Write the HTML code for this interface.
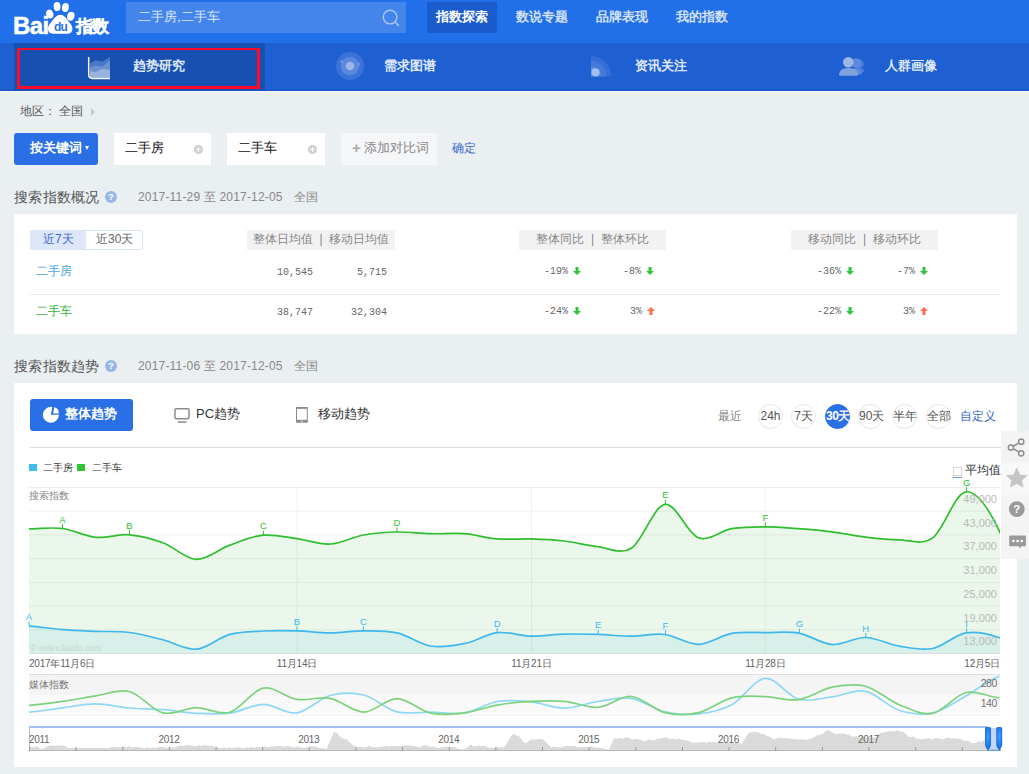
<!DOCTYPE html>
<html><head><meta charset="utf-8">
<style>
*{box-sizing:border-box;margin:0;padding:0}
html,body{width:1029px;height:774px;overflow:hidden}
body{background:#eaeff2;font-family:"Liberation Sans",sans-serif;position:relative;color:#333}
.a{position:absolute;white-space:nowrap}
#top{left:0;top:0;width:1029px;height:43px;background:#2270e9}
#sub{left:0;top:43px;width:1029px;height:48px;background:#1e5fd2}
.navbtn{top:2px;height:31px;width:70px;font-size:13px;font-weight:bold;color:#d3e0f8;text-align:center;line-height:29px}
.tabt{top:57px;font-size:13px;font-weight:bold;color:#dfe8fb;line-height:18px}
.panel{background:#fff}
.h2{font-size:14px;color:#555;line-height:16px;letter-spacing:0.3px}
.date{font-size:12px;color:#888;line-height:14px;letter-spacing:0.18px}
.qm{width:12px;height:12px;border-radius:6px;background:#96b6e8;color:#fff;font-size:9.5px;font-weight:bold;text-align:center;line-height:12px}
.inp{top:133px;height:32px;background:#fff;font-size:13px;color:#111;line-height:30px;padding-left:11px}
.plus{width:9px;height:9px;border-radius:5px;background:#cfcfcf}
.plus:before{content:"";position:absolute;left:2px;top:4px;width:5px;height:1px;background:#fff}
.plus:after{content:"";position:absolute;left:4px;top:2px;width:1px;height:5px;background:#fff}
.th{top:230px;height:20px;background:#f2f2f2;font-size:12px;color:#888;line-height:19px}
.num{font-family:"Liberation Mono",monospace;font-size:10px;color:#666;line-height:12px;text-align:right}
.arr{width:8px;height:8px}
.circ{top:404px;width:25px;height:25px;border-radius:13px;border:1px solid #e6e6e6;font-size:12px;color:#555;text-align:center;line-height:23px;background:#fff}
.side{left:1001px;width:28px;height:32px;background:#f2f2f2}
</style></head><body>
<div class="a" id="top"></div>
<div class="a" id="sub"></div>
<!-- logo -->
<svg class="a" style="left:10px;top:0" width="100" height="40" viewBox="0 0 100 40">
  <text x="3" y="33.5" font-family="Liberation Sans" font-weight="bold" font-size="24" fill="#fff" stroke="#fff" stroke-width="0.5" letter-spacing="-0.6">Bai</text>
  <ellipse cx="39.8" cy="14" rx="3.6" ry="4.6" fill="#fff" transform="rotate(-20 39.8 14)"/>
  <ellipse cx="47.1" cy="6.6" rx="3.4" ry="4.5" fill="#fff" transform="rotate(-5 47.1 6.6)"/>
  <ellipse cx="55.4" cy="7.5" rx="3.4" ry="4.5" fill="#fff" transform="rotate(8 55.4 7.5)"/>
  <ellipse cx="60.8" cy="16.2" rx="3.6" ry="4.5" fill="#fff" transform="rotate(20 60.8 16.2)"/>
  <path d="M50.3,14.8 C46,14.8 43.5,19.5 41,22.5 C38,26 37.5,28.5 38.5,31 C39.5,33.5 42,33.7 44,33.7 L56.5,33.7 C58.5,33.7 61,33.5 62,31 C63,28.5 62.5,26 59.5,22.5 C57,19.5 54.5,14.8 50.3,14.8 Z" fill="#fff"/>
  <text x="50.5" y="31.2" font-family="Liberation Sans" font-weight="bold" font-size="12" fill="#2671e6" text-anchor="middle" letter-spacing="-0.8">du</text>
  <text x="66" y="32" font-weight="bold" font-size="16.5" fill="#fff" stroke="#fff" stroke-width="0.4" letter-spacing="-1">指数</text>
</svg>
<!-- search -->
<div class="a" style="left:126px;top:2px;width:280px;height:31px;background:#4485ec"></div>
<div class="a" style="left:138px;top:9px;font-size:13px;color:#dbe6f8;line-height:16px">二手房,二手车</div>
<svg class="a" style="left:381px;top:8px" width="20" height="20" viewBox="0 0 20 20"><circle cx="9.1" cy="9.1" r="6.8" fill="none" stroke="#a9c6f4" stroke-width="1.4"/><line x1="13.9" y1="14" x2="17.4" y2="17.4" stroke="#a9c6f4" stroke-width="1.6" stroke-linecap="round"/></svg>
<div class="a navbtn" style="left:427px;background:#1b5ccc;border-radius:2px;color:#fff">指数探索</div>
<div class="a navbtn" style="left:507px">数说专题</div>
<div class="a navbtn" style="left:587px">品牌表现</div>
<div class="a navbtn" style="left:667px">我的指数</div>
<!-- sub nav -->
<div class="a" style="left:14px;top:43px;width:251px;height:48px;background:#1850b1"></div>
<div class="a" style="left:0;top:90px;width:1029px;height:1px;background:#1452c4"></div>
<div class="a" style="left:17px;top:48px;width:243px;height:41px;border:solid #ff0a2a;border-width:2px 3px 3px 3px"></div>
<svg class="a" style="left:80px;top:50px" width="40" height="35" viewBox="0 0 40 35">
  <path d="M10,13.6 L15.4,10.2 L22.6,11.8 L30,6.8 V27.8 H12.5 Q10,27.8 10,25.3 Z" fill="#4a78c8"/>
  <path d="M10,18 L15.4,15.6 L22.6,16.7 L30,10.6 V27.8 H12.5 Q10,27.8 10,25.3 Z" fill="#6d92d2"/>
  <path d="M10,21.3 L15.4,22.2 L22.6,19 L30,19.9 V27.8 H12.5 Q10,27.8 10,25.3 Z" fill="#9ab3de"/>
  <path d="M8.7,7 V24.5 Q8.7,28.4 12.6,28.4 H30" fill="none" stroke="#f4f7fc" stroke-width="1.5"/>
</svg>
<div class="a tabt" style="left:133px">趋势研究</div>
<svg class="a" style="left:336px;top:52px" width="28" height="28" viewBox="0 0 28 28">
  <circle cx="14" cy="14" r="14" fill="#3a72d8"/>
  <circle cx="14" cy="14" r="9.2" fill="#5a88dd"/>
  <circle cx="14" cy="14" r="4.3" fill="#9db8e8"/>
  <circle cx="6" cy="9.7" r="1.6" fill="#6d96e0"/><circle cx="22.5" cy="12" r="1.6" fill="#6d96e0"/>
</svg>
<div class="a tabt" style="left:384px">需求图谱</div>
<svg class="a" style="left:590px;top:55px" width="24" height="24" viewBox="0 0 24 24">
  <path d="M1,1 A20.5,20.5 0 0 1 21.5,21.5 H1 Z" fill="#366dd4"/>
  <path d="M1,6 A15.5,15.5 0 0 1 16.5,21.5 H1 Z" fill="#457ad9"/>
  <path d="M1,11 A10.5,10.5 0 0 1 11.5,21.5 H1 Z" fill="#5686dd"/>
  <circle cx="5.5" cy="17.3" r="4.1" fill="#a6c0ee"/>
</svg>
<div class="a tabt" style="left:635px">资讯关注</div>
<svg class="a" style="left:832px;top:50px" width="38" height="35" viewBox="0 0 38 35">
  <circle cx="27.6" cy="14" r="4.3" fill="#4a7dd8"/><path d="M18,22.3 Q20,17.8 26,17.8 Q31.5,17.8 32.3,21 Q32.3,22.3 30.8,22.3 Z" fill="#4a7dd8"/>
  <circle cx="24.4" cy="13.1" r="4.9" fill="#5d8ade"/><path d="M14,24.5 Q16,18.6 22.5,18.6 Q29,18.6 30,23 Q30,24.5 28.5,24.5 Z" fill="#5d8ade"/>
  <circle cx="16.3" cy="12.2" r="5.3" fill="#9cb6e6"/><path d="M7,24.3 Q7.5,18.1 16.5,18.1 Q25.5,18.1 26.2,24.3 Q26.2,25.8 24.7,25.8 H8.5 Q7,25.8 7,24.3 Z" fill="#7fa1de"/>
</svg>
<div class="a tabt" style="left:885px">人群画像</div>
<div class="a" style="left:0;top:91px;width:1029px;height:1px;background:#f7f8f5"></div>

<!-- region -->
<div class="a" style="left:20px;top:104px;font-size:12px;color:#555;line-height:14px">地区：</div>
<div class="a" style="left:59px;top:104px;font-size:12px;color:#555;line-height:14px">全国</div>
<div class="a" style="left:91px;top:108px;width:0;height:0;border-left:4px solid #c8c8c8;border-top:4px solid transparent;border-bottom:4px solid transparent"></div>
<!-- keyword row -->
<div class="a" style="left:14px;top:133px;width:84px;height:32px;background:#2a6fe6;border-radius:3px"></div>
<div class="a" style="left:30px;top:140px;font-size:13px;font-weight:bold;color:#fff;line-height:16px">按关键词</div>
<div class="a" style="left:85px;top:146px;width:0;height:0;border-top:4px solid #fff;border-left:2.5px solid transparent;border-right:2.5px solid transparent"></div>
<div class="a inp" style="left:114px;width:97px">二手房</div>
<div class="a plus" style="left:194px;top:145px"></div>
<div class="a inp" style="left:227px;width:98px">二手车</div>
<div class="a plus" style="left:308px;top:145px"></div>
<div class="a" style="left:341px;top:133px;width:96px;height:32px;background:#f5f6f8"></div>
<div class="a" style="left:352px;top:139px;font-size:15px;font-weight:bold;color:#aaa;line-height:18px">+</div>
<div class="a" style="left:364px;top:140px;font-size:13px;color:#888;line-height:16px">添加对比词</div>
<div class="a" style="left:452px;top:141px;font-size:12px;color:#3a67c8;line-height:14px">确定</div>

<!-- section 1 -->
<div class="a h2" style="left:14px;top:189px">搜索指数概况</div>
<div class="a qm" style="left:105px;top:191px">?</div>
<div class="a date" style="left:138px;top:190px">2017-11-29 至 2017-12-05</div>
<div class="a date" style="left:294px;top:190px">全国</div>
<div class="a panel" style="left:14px;top:214px;width:1003px;height:120px"></div>
<div class="a" style="left:30px;top:230px;width:113px;height:20px;border:1px solid #d6e2f5;border-radius:2px;background:#fff"></div>
<div class="a" style="left:30px;top:230px;width:56px;height:20px;background:#dde7f8;border-radius:2px 0 0 2px"></div>
<div class="a" style="left:43px;top:232px;font-size:12px;color:#3c66d0;line-height:15px">近7天</div>
<div class="a" style="left:96px;top:232px;font-size:12px;color:#666;line-height:15px">近30天</div>
<div class="a th" style="left:247px;width:148px;text-align:center">整体日均值 &nbsp;|&nbsp; 移动日均值</div>
<div class="a th" style="left:519px;width:147px;text-align:center">整体同比 &nbsp;|&nbsp; 整体环比</div>
<div class="a th" style="left:791px;width:147px;text-align:center">移动同比 &nbsp;|&nbsp; 移动环比</div>
<div class="a" style="left:36px;top:264px;font-size:12px;color:#48a6e6;line-height:14px">二手房</div>
<div class="a" style="left:36px;top:304px;font-size:12px;color:#3ab23a;line-height:14px">二手车</div>
<div class="a" style="left:30px;top:294px;width:970px;height:1px;background:#eeeeee"></div>
<div class="a num" style="left:262px;top:267px;width:51px">10,545</div>
<div class="a num" style="left:336px;top:267px;width:51px">5,715</div>
<div class="a num" style="left:262px;top:307px;width:51px">38,747</div>
<div class="a num" style="left:336px;top:307px;width:51px">32,304</div>
<div class="a num" style="left:528px;top:266px;width:40px">-19%</div>
<svg class="a" style="left:573px;top:267px" width="8" height="8" viewBox="0 0 8 8"><path d="M2.5,0 L5.5,0 L5.5,4 L8,4 L4,8 L0,4 L2.5,4 Z" fill="#2ec53a"/></svg>
<div class="a num" style="left:601px;top:266px;width:40px">-8%</div>
<svg class="a" style="left:646px;top:267px" width="8" height="8" viewBox="0 0 8 8"><path d="M2.5,0 L5.5,0 L5.5,4 L8,4 L4,8 L0,4 L2.5,4 Z" fill="#2ec53a"/></svg>
<div class="a num" style="left:801px;top:266px;width:40px">-36%</div>
<svg class="a" style="left:846px;top:267px" width="8" height="8" viewBox="0 0 8 8"><path d="M2.5,0 L5.5,0 L5.5,4 L8,4 L4,8 L0,4 L2.5,4 Z" fill="#2ec53a"/></svg>
<div class="a num" style="left:875px;top:266px;width:40px">-7%</div>
<svg class="a" style="left:920px;top:267px" width="8" height="8" viewBox="0 0 8 8"><path d="M2.5,0 L5.5,0 L5.5,4 L8,4 L4,8 L0,4 L2.5,4 Z" fill="#2ec53a"/></svg>
<div class="a num" style="left:528px;top:306px;width:40px">-24%</div>
<svg class="a" style="left:573px;top:307px" width="8" height="8" viewBox="0 0 8 8"><path d="M2.5,0 L5.5,0 L5.5,4 L8,4 L4,8 L0,4 L2.5,4 Z" fill="#2ec53a"/></svg>
<div class="a num" style="left:602px;top:306px;width:40px">3%</div>
<svg class="a" style="left:647px;top:307px" width="8" height="8" viewBox="0 0 8 8"><path d="M4,0 L8,4 L5.5,4 L5.5,8 L2.5,8 L2.5,4 L0,4 Z" fill="#ff6e4f"/></svg>
<div class="a num" style="left:801px;top:306px;width:40px">-22%</div>
<svg class="a" style="left:846px;top:307px" width="8" height="8" viewBox="0 0 8 8"><path d="M2.5,0 L5.5,0 L5.5,4 L8,4 L4,8 L0,4 L2.5,4 Z" fill="#2ec53a"/></svg>
<div class="a num" style="left:875px;top:306px;width:40px">3%</div>
<svg class="a" style="left:920px;top:307px" width="8" height="8" viewBox="0 0 8 8"><path d="M4,0 L8,4 L5.5,4 L5.5,8 L2.5,8 L2.5,4 L0,4 Z" fill="#ff6e4f"/></svg>

<!-- section 2 -->
<div class="a h2" style="left:14px;top:358px">搜索指数趋势</div>
<div class="a qm" style="left:105px;top:360px">?</div>
<div class="a date" style="left:138px;top:359px">2017-11-06 至 2017-12-05</div>
<div class="a date" style="left:294px;top:359px">全国</div>
<div class="a panel" style="left:14px;top:383px;width:1003px;height:384px"></div>
<div class="a" style="left:30px;top:399px;width:103px;height:32px;background:#2a6fe6;border-radius:3px"></div>
<svg class="a" style="left:42px;top:406px" width="18" height="18" viewBox="0 0 18 18">
  <path d="M8.9,8.8 L10.29,0.92 A8,8 0 1 0 16.9,8.8 Z" fill="#fff"/>
  <path d="M11.1,7.4 L12.3,1.3 A6.2,6.2 0 0 1 16.9,7.4 Z" fill="#fff"/>
</svg>
<div class="a" style="left:65px;top:406px;font-size:13px;font-weight:bold;color:#fff;line-height:16px">整体趋势</div>
<svg class="a" style="left:168px;top:402px" width="28" height="26" viewBox="0 0 28 26">
  <rect x="6.95" y="6.75" width="14.1" height="10.1" rx="1.5" fill="none" stroke="#8a8a8a" stroke-width="1.5"/>
  <rect x="9.7" y="19.3" width="8.8" height="1.5" fill="#8a8a8a"/>
</svg>
<div class="a" style="left:196px;top:406px;font-size:13px;color:#333;line-height:16px">PC趋势</div>
<svg class="a" style="left:290px;top:402px" width="24" height="26" viewBox="0 0 24 26">
  <rect x="6" y="5" width="11.8" height="15.7" fill="#8a8a8a"/>
  <rect x="7" y="6.85" width="9.8" height="10.95" fill="#fff"/>
  <circle cx="11.9" cy="19.2" r="0.8" fill="#fff"/>
</svg>
<div class="a" style="left:318px;top:406px;font-size:13px;color:#333;line-height:16px">移动趋势</div>
<div class="a" style="left:718px;top:409px;font-size:12px;color:#888;line-height:15px">最近</div>
<div class="a circ" style="left:758px">24h</div>
<div class="a circ" style="left:791px">7天</div>
<div class="a circ" style="left:825px;background:#2a6fe6;border-color:#2a6fe6;color:#fff;font-weight:bold;letter-spacing:-0.5px">30天</div>
<div class="a circ" style="left:858px">90天</div>
<div class="a circ" style="left:892px">半年</div>
<div class="a circ" style="left:926px">全部</div>
<div class="a" style="left:960px;top:409px;font-size:12px;color:#3a67c8;line-height:15px">自定义</div>
<div class="a" style="left:30px;top:447px;width:987px;height:1px;background:#dddddd"></div>
<div class="a" style="left:29px;top:464px;width:8px;height:7px;background:#3cbcf0"></div>
<div class="a" style="left:43px;top:462px;font-size:10px;color:#333;line-height:12px">二手房</div>
<div class="a" style="left:77px;top:464px;width:8px;height:7px;background:#2ec42e"></div>
<div class="a" style="left:92px;top:462px;font-size:10px;color:#333;line-height:12px">二手车</div>
<div class="a" style="left:29px;top:490px;font-size:10px;color:#888;line-height:12px">搜索指数</div>
<div class="a" style="left:953px;top:467px;width:9px;height:9px;border:1px solid #d6d6d6;background:#fff"></div>
<div class="a" style="left:953px;top:477px;width:9px;height:1px;background:#6a9ae6"></div>
<div class="a" style="left:965px;top:463px;font-size:12px;color:#333;line-height:15px">平均值</div>
<svg width="1029" height="774" style="position:absolute;left:0;top:0">
<line x1="29" x2="1000" y1="487.5" y2="487.5" stroke="#eeeeee" stroke-width="1"/>
<line x1="29" x2="1000" y1="511.2" y2="511.2" stroke="#f1f1f1" stroke-width="1"/>
<line x1="29" x2="1000" y1="534.9" y2="534.9" stroke="#f1f1f1" stroke-width="1"/>
<line x1="29" x2="1000" y1="558.6" y2="558.6" stroke="#f1f1f1" stroke-width="1"/>
<line x1="29" x2="1000" y1="582.4" y2="582.4" stroke="#f1f1f1" stroke-width="1"/>
<line x1="29" x2="1000" y1="606.1" y2="606.1" stroke="#f1f1f1" stroke-width="1"/>
<line x1="29" x2="1000" y1="629.8" y2="629.8" stroke="#f1f1f1" stroke-width="1"/>
<line x1="29" x2="1000" y1="653.5" y2="653.5" stroke="#eeeeee" stroke-width="1"/>
<line x1="297.0" x2="297.0" y1="487" y2="653" stroke="#eef0ee" stroke-width="1"/>
<line x1="531.5" x2="531.5" y1="487" y2="653" stroke="#eef0ee" stroke-width="1"/>
<line x1="765.3" x2="765.3" y1="487" y2="653" stroke="#eef0ee" stroke-width="1"/>
<defs><clipPath id="cc"><rect x="29" y="470" width="971" height="184"/></clipPath></defs><g clip-path="url(#cc)">
<path d="M29.00,528.80 C40.16,528.75 51.31,527.08 62.47,528.50 C73.62,529.92 84.78,536.25 95.93,537.30 C107.09,538.35 118.24,533.90 129.40,534.80 C140.55,535.70 151.71,538.62 162.86,542.70 C174.02,546.78 185.17,558.90 196.33,559.30 C207.48,559.70 218.64,549.12 229.79,545.10 C240.95,541.08 252.10,536.28 263.26,535.20 C274.41,534.12 285.57,537.13 296.72,538.60 C307.88,540.07 319.03,544.60 330.19,544.00 C341.34,543.40 352.50,537.00 363.66,535.00 C374.81,533.00 385.97,532.22 397.12,532.00 C408.28,531.78 419.43,533.42 430.59,533.70 C441.74,533.98 452.90,532.83 464.05,533.70 C475.21,534.57 486.36,538.03 497.52,538.90 C508.67,539.77 519.83,538.55 530.98,538.90 C542.14,539.25 553.29,539.70 564.45,541.00 C575.60,542.30 586.76,545.50 597.91,546.70 C609.07,547.90 620.22,555.25 631.38,548.20 C642.53,541.15 653.69,506.15 664.84,504.40 C676.00,502.65 687.15,533.65 698.31,537.70 C709.47,541.75 720.62,530.52 731.78,528.70 C742.93,526.88 754.09,526.80 765.24,526.80 C776.40,526.80 787.55,527.85 798.71,528.70 C809.86,529.55 821.02,530.50 832.17,531.90 C843.33,533.30 854.48,535.78 865.64,537.10 C876.79,538.42 887.95,539.67 899.10,539.80 C910.26,539.93 921.41,545.90 932.57,537.90 C943.72,529.90 954.88,492.90 966.03,491.80 C977.19,490.70 988.34,507.73 999.50,531.30 C1010.65,554.87 1021.81,616.22 1032.96,633.20 L1040,653 L29,653 Z" fill="#2db52d" fill-opacity="0.10"/>
<path d="M29.00,626.20 C40.16,626.77 51.31,628.75 62.47,629.60 C73.62,630.45 84.78,630.82 95.93,631.30 C107.09,631.78 118.24,631.08 129.40,632.50 C140.55,633.92 151.71,637.02 162.86,639.80 C174.02,642.58 185.17,650.10 196.33,649.20 C207.48,648.30 218.64,637.43 229.79,634.40 C240.95,631.37 252.10,631.58 263.26,631.00 C274.41,630.42 285.57,630.60 296.72,630.90 C307.88,631.20 319.03,632.82 330.19,632.80 C341.34,632.78 352.50,630.78 363.66,630.80 C374.81,630.82 385.97,630.37 397.12,632.90 C408.28,635.43 419.43,644.20 430.59,646.00 C441.74,647.80 452.90,645.92 464.05,643.70 C475.21,641.48 486.36,633.97 497.52,632.70 C508.67,631.43 519.83,635.87 530.98,636.10 C542.14,636.33 553.29,634.38 564.45,634.10 C575.60,633.82 586.76,634.05 597.91,634.40 C609.07,634.75 620.22,636.18 631.38,636.20 C642.53,636.22 653.69,633.15 664.84,634.50 C676.00,635.85 687.15,644.48 698.31,644.30 C709.47,644.12 720.62,635.35 731.78,633.40 C742.93,631.45 754.09,632.65 765.24,632.60 C776.40,632.55 787.55,631.12 798.71,633.10 C809.86,635.08 821.02,643.77 832.17,644.50 C843.33,645.23 854.48,637.23 865.64,637.50 C876.79,637.77 887.95,644.27 899.10,646.10 C910.26,647.93 921.41,650.72 932.57,648.50 C943.72,646.28 954.88,634.60 966.03,632.80 C977.19,631.00 988.34,633.72 999.50,637.70 C1010.65,641.68 1021.81,653.53 1032.96,656.70 L1040,653 L29,653 Z" fill="#3ab6ea" fill-opacity="0.10"/>
<path d="M29.00,528.80 C40.16,528.75 51.31,527.08 62.47,528.50 C73.62,529.92 84.78,536.25 95.93,537.30 C107.09,538.35 118.24,533.90 129.40,534.80 C140.55,535.70 151.71,538.62 162.86,542.70 C174.02,546.78 185.17,558.90 196.33,559.30 C207.48,559.70 218.64,549.12 229.79,545.10 C240.95,541.08 252.10,536.28 263.26,535.20 C274.41,534.12 285.57,537.13 296.72,538.60 C307.88,540.07 319.03,544.60 330.19,544.00 C341.34,543.40 352.50,537.00 363.66,535.00 C374.81,533.00 385.97,532.22 397.12,532.00 C408.28,531.78 419.43,533.42 430.59,533.70 C441.74,533.98 452.90,532.83 464.05,533.70 C475.21,534.57 486.36,538.03 497.52,538.90 C508.67,539.77 519.83,538.55 530.98,538.90 C542.14,539.25 553.29,539.70 564.45,541.00 C575.60,542.30 586.76,545.50 597.91,546.70 C609.07,547.90 620.22,555.25 631.38,548.20 C642.53,541.15 653.69,506.15 664.84,504.40 C676.00,502.65 687.15,533.65 698.31,537.70 C709.47,541.75 720.62,530.52 731.78,528.70 C742.93,526.88 754.09,526.80 765.24,526.80 C776.40,526.80 787.55,527.85 798.71,528.70 C809.86,529.55 821.02,530.50 832.17,531.90 C843.33,533.30 854.48,535.78 865.64,537.10 C876.79,538.42 887.95,539.67 899.10,539.80 C910.26,539.93 921.41,545.90 932.57,537.90 C943.72,529.90 954.88,492.90 966.03,491.80 C977.19,490.70 988.34,507.73 999.50,531.30 C1010.65,554.87 1021.81,616.22 1032.96,633.20" fill="none" stroke="#2fbe2f" stroke-width="1.7"/>
<path d="M29.00,626.20 C40.16,626.77 51.31,628.75 62.47,629.60 C73.62,630.45 84.78,630.82 95.93,631.30 C107.09,631.78 118.24,631.08 129.40,632.50 C140.55,633.92 151.71,637.02 162.86,639.80 C174.02,642.58 185.17,650.10 196.33,649.20 C207.48,648.30 218.64,637.43 229.79,634.40 C240.95,631.37 252.10,631.58 263.26,631.00 C274.41,630.42 285.57,630.60 296.72,630.90 C307.88,631.20 319.03,632.82 330.19,632.80 C341.34,632.78 352.50,630.78 363.66,630.80 C374.81,630.82 385.97,630.37 397.12,632.90 C408.28,635.43 419.43,644.20 430.59,646.00 C441.74,647.80 452.90,645.92 464.05,643.70 C475.21,641.48 486.36,633.97 497.52,632.70 C508.67,631.43 519.83,635.87 530.98,636.10 C542.14,636.33 553.29,634.38 564.45,634.10 C575.60,633.82 586.76,634.05 597.91,634.40 C609.07,634.75 620.22,636.18 631.38,636.20 C642.53,636.22 653.69,633.15 664.84,634.50 C676.00,635.85 687.15,644.48 698.31,644.30 C709.47,644.12 720.62,635.35 731.78,633.40 C742.93,631.45 754.09,632.65 765.24,632.60 C776.40,632.55 787.55,631.12 798.71,633.10 C809.86,635.08 821.02,643.77 832.17,644.50 C843.33,645.23 854.48,637.23 865.64,637.50 C876.79,637.77 887.95,644.27 899.10,646.10 C910.26,647.93 921.41,650.72 932.57,648.50 C943.72,646.28 954.88,634.60 966.03,632.80 C977.19,631.00 988.34,633.72 999.50,637.70 C1010.65,641.68 1021.81,653.53 1032.96,656.70" fill="none" stroke="#3db8ec" stroke-width="1.7"/>
</g>
<line x1="62.5" x2="62.5" y1="524.0" y2="528.5" stroke="#2fbe2f" stroke-width="1"/>
<text x="62.5" y="522.5" font-size="9.5" fill="#2fbe2f" text-anchor="middle" font-family="Liberation Sans">A</text>
<line x1="129.5" x2="129.5" y1="530.3" y2="534.8" stroke="#2fbe2f" stroke-width="1"/>
<text x="129.5" y="528.8" font-size="9.5" fill="#2fbe2f" text-anchor="middle" font-family="Liberation Sans">B</text>
<line x1="263.4" x2="263.4" y1="530.7" y2="535.2" stroke="#2fbe2f" stroke-width="1"/>
<text x="263.4" y="529.2" font-size="9.5" fill="#2fbe2f" text-anchor="middle" font-family="Liberation Sans">C</text>
<line x1="397.0" x2="397.0" y1="527.5" y2="532.0" stroke="#2fbe2f" stroke-width="1"/>
<text x="397.0" y="526.0" font-size="9.5" fill="#2fbe2f" text-anchor="middle" font-family="Liberation Sans">D</text>
<line x1="665.4" x2="665.4" y1="499.8" y2="504.3" stroke="#2fbe2f" stroke-width="1"/>
<text x="665.4" y="498.3" font-size="9.5" fill="#2fbe2f" text-anchor="middle" font-family="Liberation Sans">E</text>
<line x1="765.3" x2="765.3" y1="522.3" y2="526.8" stroke="#2fbe2f" stroke-width="1"/>
<text x="765.3" y="520.8" font-size="9.5" fill="#2fbe2f" text-anchor="middle" font-family="Liberation Sans">F</text>
<line x1="966.6" x2="966.6" y1="487.3" y2="491.8" stroke="#2fbe2f" stroke-width="1"/>
<text x="966.6" y="485.8" font-size="9.5" fill="#2fbe2f" text-anchor="middle" font-family="Liberation Sans">G</text>
<line x1="29.0" x2="29.0" y1="621.7" y2="626.2" stroke="#3db8ec" stroke-width="1"/>
<text x="29.0" y="620.2" font-size="9.5" fill="#3db8ec" text-anchor="middle" font-family="Liberation Sans">A</text>
<line x1="297.0" x2="297.0" y1="626.4" y2="630.9" stroke="#3db8ec" stroke-width="1"/>
<text x="297.0" y="624.9" font-size="9.5" fill="#3db8ec" text-anchor="middle" font-family="Liberation Sans">B</text>
<line x1="363.4" x2="363.4" y1="626.3" y2="630.8" stroke="#3db8ec" stroke-width="1"/>
<text x="363.4" y="624.8" font-size="9.5" fill="#3db8ec" text-anchor="middle" font-family="Liberation Sans">C</text>
<line x1="497.2" x2="497.2" y1="628.2" y2="632.7" stroke="#3db8ec" stroke-width="1"/>
<text x="497.2" y="626.7" font-size="9.5" fill="#3db8ec" text-anchor="middle" font-family="Liberation Sans">D</text>
<line x1="598.2" x2="598.2" y1="629.9" y2="634.4" stroke="#3db8ec" stroke-width="1"/>
<text x="598.2" y="628.4" font-size="9.5" fill="#3db8ec" text-anchor="middle" font-family="Liberation Sans">E</text>
<line x1="665.4" x2="665.4" y1="630.1" y2="634.6" stroke="#3db8ec" stroke-width="1"/>
<text x="665.4" y="628.6" font-size="9.5" fill="#3db8ec" text-anchor="middle" font-family="Liberation Sans">F</text>
<line x1="799.4" x2="799.4" y1="628.7" y2="633.2" stroke="#3db8ec" stroke-width="1"/>
<text x="799.4" y="627.2" font-size="9.5" fill="#3db8ec" text-anchor="middle" font-family="Liberation Sans">G</text>
<line x1="865.8" x2="865.8" y1="633.0" y2="637.5" stroke="#3db8ec" stroke-width="1"/>
<text x="865.8" y="631.5" font-size="9.5" fill="#3db8ec" text-anchor="middle" font-family="Liberation Sans">H</text>
<line x1="966.6" x2="966.6" y1="628.2" y2="632.7" stroke="#3db8ec" stroke-width="1"/>
<text x="966.6" y="626.7" font-size="9.5" fill="#3db8ec" text-anchor="middle" font-family="Liberation Sans">I</text>
<text x="997" y="503.0" font-size="11" fill="#b9b9b9" text-anchor="end" font-family="Liberation Sans">49,000</text>
<text x="997" y="526.7" font-size="11" fill="#b9b9b9" text-anchor="end" font-family="Liberation Sans">43,000</text>
<text x="997" y="550.4" font-size="11" fill="#b9b9b9" text-anchor="end" font-family="Liberation Sans">37,000</text>
<text x="997" y="574.1" font-size="11" fill="#b9b9b9" text-anchor="end" font-family="Liberation Sans">31,000</text>
<text x="997" y="597.9" font-size="11" fill="#b9b9b9" text-anchor="end" font-family="Liberation Sans">25,000</text>
<text x="997" y="621.6" font-size="11" fill="#b9b9b9" text-anchor="end" font-family="Liberation Sans">19,000</text>
<text x="997" y="645.3" font-size="11" fill="#b9b9b9" text-anchor="end" font-family="Liberation Sans">13,000</text>
<line x1="29" x2="1000" y1="653.5" y2="653.5" stroke="#dcdcdc"/>
<text x="30.5" y="650.5" font-size="8.5" fill="#c5d6cf" font-family="Liberation Sans">&#169; index.baidu.com</text>
<text x="29.0" y="667" font-size="10" fill="#5f5f5f" text-anchor="start" font-family="Liberation Sans" letter-spacing="-0.2">2017年11月6日</text>
<text x="297.0" y="667" font-size="10" fill="#5f5f5f" text-anchor="middle" font-family="Liberation Sans" letter-spacing="-0.2">11月14日</text>
<text x="531.5" y="667" font-size="10" fill="#5f5f5f" text-anchor="middle" font-family="Liberation Sans" letter-spacing="-0.2">11月21日</text>
<text x="765.3" y="667" font-size="10" fill="#5f5f5f" text-anchor="middle" font-family="Liberation Sans" letter-spacing="-0.2">11月28日</text>
<text x="1000.0" y="667" font-size="10" fill="#5f5f5f" text-anchor="end" font-family="Liberation Sans" letter-spacing="-0.2">12月5日</text>
<defs><linearGradient id="mg" x1="0" y1="0" x2="0" y2="1"><stop offset="0" stop-color="#f3f3f3"/><stop offset="1" stop-color="#fbfbfb"/></linearGradient></defs>
<rect x="29" y="675" width="971" height="20" fill="#f4f4f4"/>
<rect x="29" y="695" width="971" height="20" fill="#f9f9f9"/>
<line x1="29" x2="1000" y1="674.5" y2="674.5" stroke="#dedede"/>
<line x1="29" x2="1000" y1="715.5" y2="715.5" stroke="#f3f3f3"/>
<text x="29" y="687.5" font-size="10" fill="#777" font-family="Liberation Sans">媒体指数</text>
<path d="M29.00,712.10 C40.16,711.38 51.31,709.17 62.47,707.80 C73.62,706.43 84.78,703.87 95.93,703.90 C107.09,703.93 118.24,707.03 129.40,708.00 C140.55,708.97 151.71,708.82 162.86,709.70 C174.02,710.58 185.17,712.73 196.33,713.30 C207.48,713.87 218.64,714.60 229.79,713.10 C240.95,711.60 252.10,704.33 263.26,704.30 C274.41,704.27 285.57,714.37 296.72,712.90 C307.88,711.43 319.03,698.48 330.19,695.50 C341.34,692.52 352.50,692.27 363.66,695.00 C374.81,697.73 385.97,709.07 397.12,711.90 C408.28,714.73 419.43,711.82 430.59,712.00 C441.74,712.18 452.90,714.75 464.05,713.00 C475.21,711.25 486.36,703.35 497.52,701.50 C508.67,699.65 519.83,700.80 530.98,701.90 C542.14,703.00 553.29,708.17 564.45,708.10 C575.60,708.03 586.76,703.13 597.91,701.50 C609.07,699.87 620.22,696.57 631.38,698.30 C642.53,700.03 653.69,709.30 664.84,711.90 C676.00,714.50 687.15,715.08 698.31,713.90 C709.47,712.72 720.62,710.72 731.78,704.80 C742.93,698.88 754.09,679.32 765.24,678.40 C776.40,677.48 787.55,696.22 798.71,699.30 C809.86,702.38 821.02,698.23 832.17,696.90 C843.33,695.57 854.48,689.07 865.64,691.30 C876.79,693.53 887.95,706.70 899.10,710.30 C910.26,713.90 921.41,715.30 932.57,712.90 C943.72,710.50 954.88,701.98 966.03,695.90 C977.19,689.82 988.34,679.65 999.50,676.40" fill="none" stroke="#8ed8f4" stroke-width="1.7"/>
<path d="M29.00,705.30 C40.16,704.65 51.31,702.97 62.47,701.40 C73.62,699.83 84.78,697.55 95.93,695.90 C107.09,694.25 118.24,688.67 129.40,691.50 C140.55,694.33 151.71,710.20 162.86,712.90 C174.02,715.60 185.17,707.80 196.33,707.70 C207.48,707.60 218.64,715.55 229.79,712.30 C240.95,709.05 252.10,690.35 263.26,688.20 C274.41,686.05 285.57,697.72 296.72,699.40 C307.88,701.08 319.03,696.17 330.19,698.30 C341.34,700.43 352.50,712.15 363.66,712.20 C374.81,712.25 385.97,698.43 397.12,698.60 C408.28,698.77 419.43,710.82 430.59,713.20 C441.74,715.58 452.90,714.25 464.05,712.90 C475.21,711.55 486.36,707.02 497.52,705.10 C508.67,703.18 519.83,702.03 530.98,701.40 C542.14,700.77 553.29,700.32 564.45,701.30 C575.60,702.28 586.76,708.10 597.91,707.30 C609.07,706.50 620.22,695.60 631.38,696.50 C642.53,697.40 653.69,710.00 664.84,712.70 C676.00,715.40 687.15,715.18 698.31,712.70 C709.47,710.22 720.62,700.48 731.78,697.80 C742.93,695.12 754.09,696.28 765.24,696.60 C776.40,696.92 787.55,701.27 798.71,699.70 C809.86,698.13 821.02,689.45 832.17,687.20 C843.33,684.95 854.48,683.28 865.64,686.20 C876.79,689.12 887.95,700.17 899.10,704.70 C910.26,709.23 921.41,715.43 932.57,713.40 C943.72,711.37 954.88,695.07 966.03,692.50 C977.19,689.93 988.34,697.08 999.50,698.00" fill="none" stroke="#7dd37d" stroke-width="1.7"/>
<text x="997" y="687.3" font-size="10.5" fill="#707070" text-anchor="end" font-family="Liberation Sans" letter-spacing="-0.4">280</text>
<text x="997" y="707" font-size="10.5" fill="#707070" text-anchor="end" font-family="Liberation Sans" letter-spacing="-0.4">140</text>
<path d="M29,750 L29.0,747.2 L31.5,746.7 L34.0,747.5 L36.5,746.3 L39.0,748.0 L41.5,749.2 L44.0,748.3 L46.5,746.9 L49.0,745.8 L51.5,745.2 L54.0,746.0 L56.5,745.2 L59.0,745.9 L61.5,745.2 L64.0,745.8 L66.5,747.0 L69.0,748.3 L71.5,748.0 L74.0,748.0 L76.5,748.0 L79.0,748.0 L81.5,748.0 L84.0,748.0 L86.5,748.0 L89.0,748.0 L91.5,748.0 L94.0,748.0 L96.5,748.0 L99.0,748.0 L101.5,748.0 L104.0,748.0 L106.5,748.0 L109.0,748.0 L111.5,747.0 L114.0,746.8 L116.5,747.0 L119.0,747.3 L121.5,746.8 L124.0,746.6 L126.5,747.7 L129.0,746.1 L131.5,747.8 L134.0,747.0 L136.5,747.0 L139.0,747.2 L141.5,747.6 L144.0,748.5 L146.5,747.3 L149.0,748.0 L151.5,748.1 L154.0,747.6 L156.5,747.9 L159.0,746.9 L161.5,746.9 L164.0,747.1 L166.5,747.9 L169.0,747.5 L171.5,747.2 L174.0,747.7 L176.5,746.8 L179.0,745.5 L181.5,746.0 L184.0,745.9 L186.5,745.0 L189.0,745.6 L191.5,745.5 L194.0,746.2 L196.5,745.9 L199.0,745.1 L201.5,746.4 L204.0,744.8 L206.5,745.4 L209.0,746.0 L211.5,745.5 L214.0,747.1 L216.5,746.7 L219.0,747.8 L221.5,748.0 L224.0,747.6 L226.5,748.2 L229.0,747.2 L231.5,747.9 L234.0,747.7 L236.5,747.6 L239.0,747.4 L241.5,748.1 L244.0,748.3 L246.5,747.5 L249.0,747.8 L251.5,746.7 L254.0,747.9 L256.5,747.0 L259.0,747.1 L261.5,747.5 L264.0,746.6 L266.5,746.7 L269.0,747.2 L271.5,745.9 L274.0,746.7 L276.5,746.1 L279.0,745.9 L281.5,745.8 L284.0,747.0 L286.5,745.9 L289.0,746.3 L291.5,746.7 L294.0,747.8 L296.5,746.5 L299.0,747.3 L301.5,747.5 L304.0,747.9 L306.5,747.5 L309.0,747.4 L311.5,746.1 L314.0,746.5 L316.5,746.7 L319.0,747.9 L321.5,748.3 L324.0,748.3 L326.5,749.3 L329.0,743.1 L331.5,737.7 L334.0,732.1 L336.5,732.6 L339.0,735.6 L341.5,738.1 L344.0,738.8 L346.5,739.3 L349.0,741.6 L351.5,743.9 L354.0,745.8 L356.5,746.9 L359.0,746.8 L361.5,746.9 L364.0,747.5 L366.5,747.4 L369.0,745.5 L371.5,747.0 L374.0,747.3 L376.5,747.6 L379.0,747.5 L381.5,746.7 L384.0,746.6 L386.5,746.1 L389.0,747.0 L391.5,745.9 L394.0,745.8 L396.5,746.0 L399.0,745.9 L401.5,746.1 L404.0,745.5 L406.5,745.3 L409.0,745.4 L411.5,745.5 L414.0,746.3 L416.5,746.0 L419.0,747.5 L421.5,746.5 L424.0,745.1 L426.5,745.5 L429.0,746.4 L431.5,746.8 L434.0,746.4 L436.5,747.8 L439.0,748.1 L441.5,747.2 L444.0,747.3 L446.5,746.6 L449.0,746.7 L451.5,747.1 L454.0,747.1 L456.5,748.1 L459.0,749.1 L461.5,749.4 L464.0,749.1 L466.5,748.5 L469.0,745.6 L471.5,744.7 L474.0,746.5 L476.5,745.9 L479.0,745.3 L481.5,746.2 L484.0,745.5 L486.5,746.7 L489.0,747.8 L491.5,747.8 L494.0,747.8 L496.5,747.2 L499.0,747.7 L501.5,747.1 L504.0,747.7 L506.5,744.0 L509.0,739.3 L511.5,735.6 L514.0,733.8 L516.5,735.4 L519.0,736.2 L521.5,739.4 L524.0,742.7 L526.5,743.0 L529.0,741.1 L531.5,739.2 L534.0,739.8 L536.5,739.5 L539.0,738.9 L541.5,738.9 L544.0,740.3 L546.5,742.5 L549.0,745.5 L551.5,747.3 L554.0,746.4 L556.5,747.3 L559.0,747.4 L561.5,747.3 L564.0,746.3 L566.5,746.0 L569.0,746.0 L571.5,746.0 L574.0,746.0 L576.5,746.7 L579.0,747.3 L581.5,747.3 L584.0,746.7 L586.5,747.1 L589.0,747.4 L591.5,746.2 L594.0,747.3 L596.5,747.8 L599.0,747.7 L601.5,747.9 L604.0,748.5 L606.5,749.5 L609.0,749.5 L611.5,743.8 L614.0,738.2 L616.5,739.0 L619.0,737.9 L621.5,738.5 L624.0,738.5 L626.5,737.3 L629.0,737.8 L631.5,739.4 L634.0,739.5 L636.5,739.1 L639.0,739.6 L641.5,740.2 L644.0,741.2 L646.5,740.8 L649.0,739.3 L651.5,740.2 L654.0,740.2 L656.5,739.3 L659.0,738.4 L661.5,738.5 L664.0,737.5 L666.5,737.3 L669.0,739.1 L671.5,738.7 L674.0,738.5 L676.5,739.4 L679.0,738.6 L681.5,739.5 L684.0,740.3 L686.5,740.2 L689.0,741.3 L691.5,742.4 L694.0,742.4 L696.5,742.9 L699.0,742.2 L701.5,742.4 L704.0,741.7 L706.5,743.0 L709.0,741.8 L711.5,741.9 L714.0,742.0 L716.5,742.6 L719.0,741.9 L721.5,743.0 L724.0,742.4 L726.5,742.7 L729.0,742.8 L731.5,742.1 L734.0,743.0 L736.5,742.7 L739.0,742.6 L741.5,744.2 L744.0,740.2 L746.5,735.9 L749.0,732.7 L751.5,732.2 L754.0,731.7 L756.5,731.9 L759.0,732.7 L761.5,734.1 L764.0,733.9 L766.5,735.8 L769.0,736.5 L771.5,737.8 L774.0,739.7 L776.5,738.3 L779.0,737.5 L781.5,738.0 L784.0,738.6 L786.5,738.0 L789.0,738.7 L791.5,738.8 L794.0,739.1 L796.5,739.6 L799.0,739.2 L801.5,739.4 L804.0,739.3 L806.5,740.1 L809.0,739.1 L811.5,738.4 L814.0,737.6 L816.5,735.5 L819.0,735.0 L821.5,734.5 L824.0,733.1 L826.5,730.6 L829.0,730.0 L831.5,732.3 L834.0,733.3 L836.5,734.4 L839.0,733.4 L841.5,733.8 L844.0,733.3 L846.5,734.6 L849.0,734.4 L851.5,736.5 L854.0,736.8 L856.5,735.9 L859.0,737.2 L861.5,737.4 L864.0,736.4 L866.5,738.0 L869.0,737.3 L871.5,737.7 L874.0,737.7 L876.5,736.2 L879.0,733.8 L881.5,733.1 L884.0,732.3 L886.5,731.7 L889.0,731.2 L891.5,731.2 L894.0,731.7 L896.5,730.3 L899.0,731.0 L901.5,731.6 L904.0,732.6 L906.5,734.8 L909.0,736.8 L911.5,737.0 L914.0,736.6 L916.5,738.7 L919.0,738.8 L921.5,739.5 L924.0,738.4 L926.5,738.8 L929.0,738.3 L931.5,739.5 L934.0,738.4 L936.5,738.0 L939.0,738.4 L941.5,739.2 L944.0,738.9 L946.5,737.7 L949.0,737.4 L951.5,738.7 L954.0,738.1 L956.5,738.9 L959.0,738.5 L961.5,739.0 L964.0,740.8 L966.5,741.0 L969.0,741.0 L971.5,743.2 L974.0,742.9 L976.5,742.7 L979.0,741.0 L981.5,742.0 L984.0,740.1 L986.5,741.6 L989.0,741.0 L991.5,740.9 L994.0,741.5 L996.5,742.3 L999.0,741.3 L1001,750 Z" fill="#dadada"/>
<line x1="29" x2="988" y1="727" y2="727" stroke="#a3c1f0" stroke-width="2"/>
<line x1="29" x2="1001" y1="750.5" y2="750.5" stroke="#b8b8b8"/>
<line x1="29.5" x2="29.5" y1="727" y2="751" stroke="#b8b8b8"/>
<line x1="29.5" x2="29.5" y1="747" y2="751" stroke="#999"/>
<line x1="76.1" x2="76.1" y1="747" y2="751" stroke="#999"/>
<line x1="122.8" x2="122.8" y1="747" y2="751" stroke="#999"/>
<line x1="169.4" x2="169.4" y1="747" y2="751" stroke="#999"/>
<line x1="216.1" x2="216.1" y1="747" y2="751" stroke="#999"/>
<line x1="262.7" x2="262.7" y1="747" y2="751" stroke="#999"/>
<line x1="309.3" x2="309.3" y1="747" y2="751" stroke="#999"/>
<line x1="356.0" x2="356.0" y1="747" y2="751" stroke="#999"/>
<line x1="402.6" x2="402.6" y1="747" y2="751" stroke="#999"/>
<line x1="449.3" x2="449.3" y1="747" y2="751" stroke="#999"/>
<line x1="495.9" x2="495.9" y1="747" y2="751" stroke="#999"/>
<line x1="542.5" x2="542.5" y1="747" y2="751" stroke="#999"/>
<line x1="589.2" x2="589.2" y1="747" y2="751" stroke="#999"/>
<line x1="635.8" x2="635.8" y1="747" y2="751" stroke="#999"/>
<line x1="682.5" x2="682.5" y1="747" y2="751" stroke="#999"/>
<line x1="729.1" x2="729.1" y1="747" y2="751" stroke="#999"/>
<line x1="775.7" x2="775.7" y1="747" y2="751" stroke="#999"/>
<line x1="822.4" x2="822.4" y1="747" y2="751" stroke="#999"/>
<line x1="869.0" x2="869.0" y1="747" y2="751" stroke="#999"/>
<line x1="915.7" x2="915.7" y1="747" y2="751" stroke="#999"/>
<line x1="962.3" x2="962.3" y1="747" y2="751" stroke="#999"/>
<text x="29" y="743" font-size="10" fill="#666" font-family="Liberation Sans" letter-spacing="-0.3">2011</text>
<text x="168.9" y="743" font-size="10" fill="#666" text-anchor="middle" font-family="Liberation Sans" letter-spacing="-0.3">2012</text>
<text x="308.8" y="743" font-size="10" fill="#666" text-anchor="middle" font-family="Liberation Sans" letter-spacing="-0.3">2013</text>
<text x="448.8" y="743" font-size="10" fill="#666" text-anchor="middle" font-family="Liberation Sans" letter-spacing="-0.3">2014</text>
<text x="588.7" y="743" font-size="10" fill="#666" text-anchor="middle" font-family="Liberation Sans" letter-spacing="-0.3">2015</text>
<text x="728.6" y="743" font-size="10" fill="#666" text-anchor="middle" font-family="Liberation Sans" letter-spacing="-0.3">2016</text>
<text x="868.5" y="743" font-size="10" fill="#666" text-anchor="middle" font-family="Liberation Sans" letter-spacing="-0.3">2017</text>
<rect x="987" y="728" width="13" height="22" fill="#c3d8f0"/>
<line x1="987" x2="1001" y1="750.3" y2="750.3" stroke="#6f9fe0" stroke-width="1.4"/>
<defs><radialGradient id="hg" cx="0.5" cy="0.4" r="0.5"><stop offset="0" stop-color="#3aa4f4"/><stop offset="1" stop-color="#1f6fe6"/></radialGradient></defs>
<path d="M985.0,728.5 Q985.0,727 986.5,727 H989.5 Q991.0,727 991.0,728.5 V744.5 Q991.0,746.5 988.0,750.5 Q985.0,746.5 985.0,744.5 Z" fill="url(#hg)"/>
<path d="M996.2,728.5 Q996.2,727 997.7,727 H1000.7 Q1002.2,727 1002.2,728.5 V744.5 Q1002.2,746.5 999.2,750.5 Q996.2,746.5 996.2,744.5 Z" fill="url(#hg)"/>
</svg>
<!-- sidebar -->
<div class="a side" style="top:431px;height:32px;background:#f3f3f3"></div>
<div class="a side" style="top:463px;height:32px;background:#f8f8f8"></div>
<div class="a side" style="top:495px;height:64px;background:#f4f4f4"></div>
<svg class="a" style="left:1001px;top:431px" width="28" height="128" viewBox="0 0 28 128">
  <g fill="none" stroke="#8e8e8e" stroke-width="1.5"><line x1="10" y1="16.5" x2="20.2" y2="10.7"/><line x1="10" y1="16.5" x2="20.2" y2="22.3"/></g>
  <g fill="#f3f3f3" stroke="#8e8e8e" stroke-width="1.5"><circle cx="9.9" cy="16.5" r="2.6"/><circle cx="20.2" cy="10.7" r="2.6"/><circle cx="20.2" cy="22.3" r="2.6"/></g>
  <path d="M15.7,37.6 L18.6,44 L25.4,44.6 L20.3,49.2 L21.8,55.6 L15.7,52.2 L9.6,55.6 L11.1,49.2 L6,44.6 L12.8,44 Z" fill="#c6c6c6" stroke="#c6c6c6" stroke-width="1.2" stroke-linejoin="round"/>
  <circle cx="15.8" cy="78.1" r="7.9" fill="#9a9a9a"/>
  <text x="15.8" y="82.3" font-size="11.5" font-weight="bold" fill="#fff" text-anchor="middle" font-family="Liberation Sans">?</text>
  <path d="M9.2,104.5 Q8.2,104.5 8.2,105.5 V114.3 Q8.2,115.3 9.2,115.3 H17.8 L19.3,117.6 L20.3,115.3 H23.9 Q24.9,115.3 24.9,114.3 V105.5 Q24.9,104.5 23.9,104.5 Z" fill="#9a9a9a"/>
  <circle cx="12.4" cy="110" r="1.3" fill="#fff"/><circle cx="16.6" cy="110" r="1.3" fill="#fff"/><circle cx="20.8" cy="110" r="1.3" fill="#fff"/>
</svg>
</body></html>
